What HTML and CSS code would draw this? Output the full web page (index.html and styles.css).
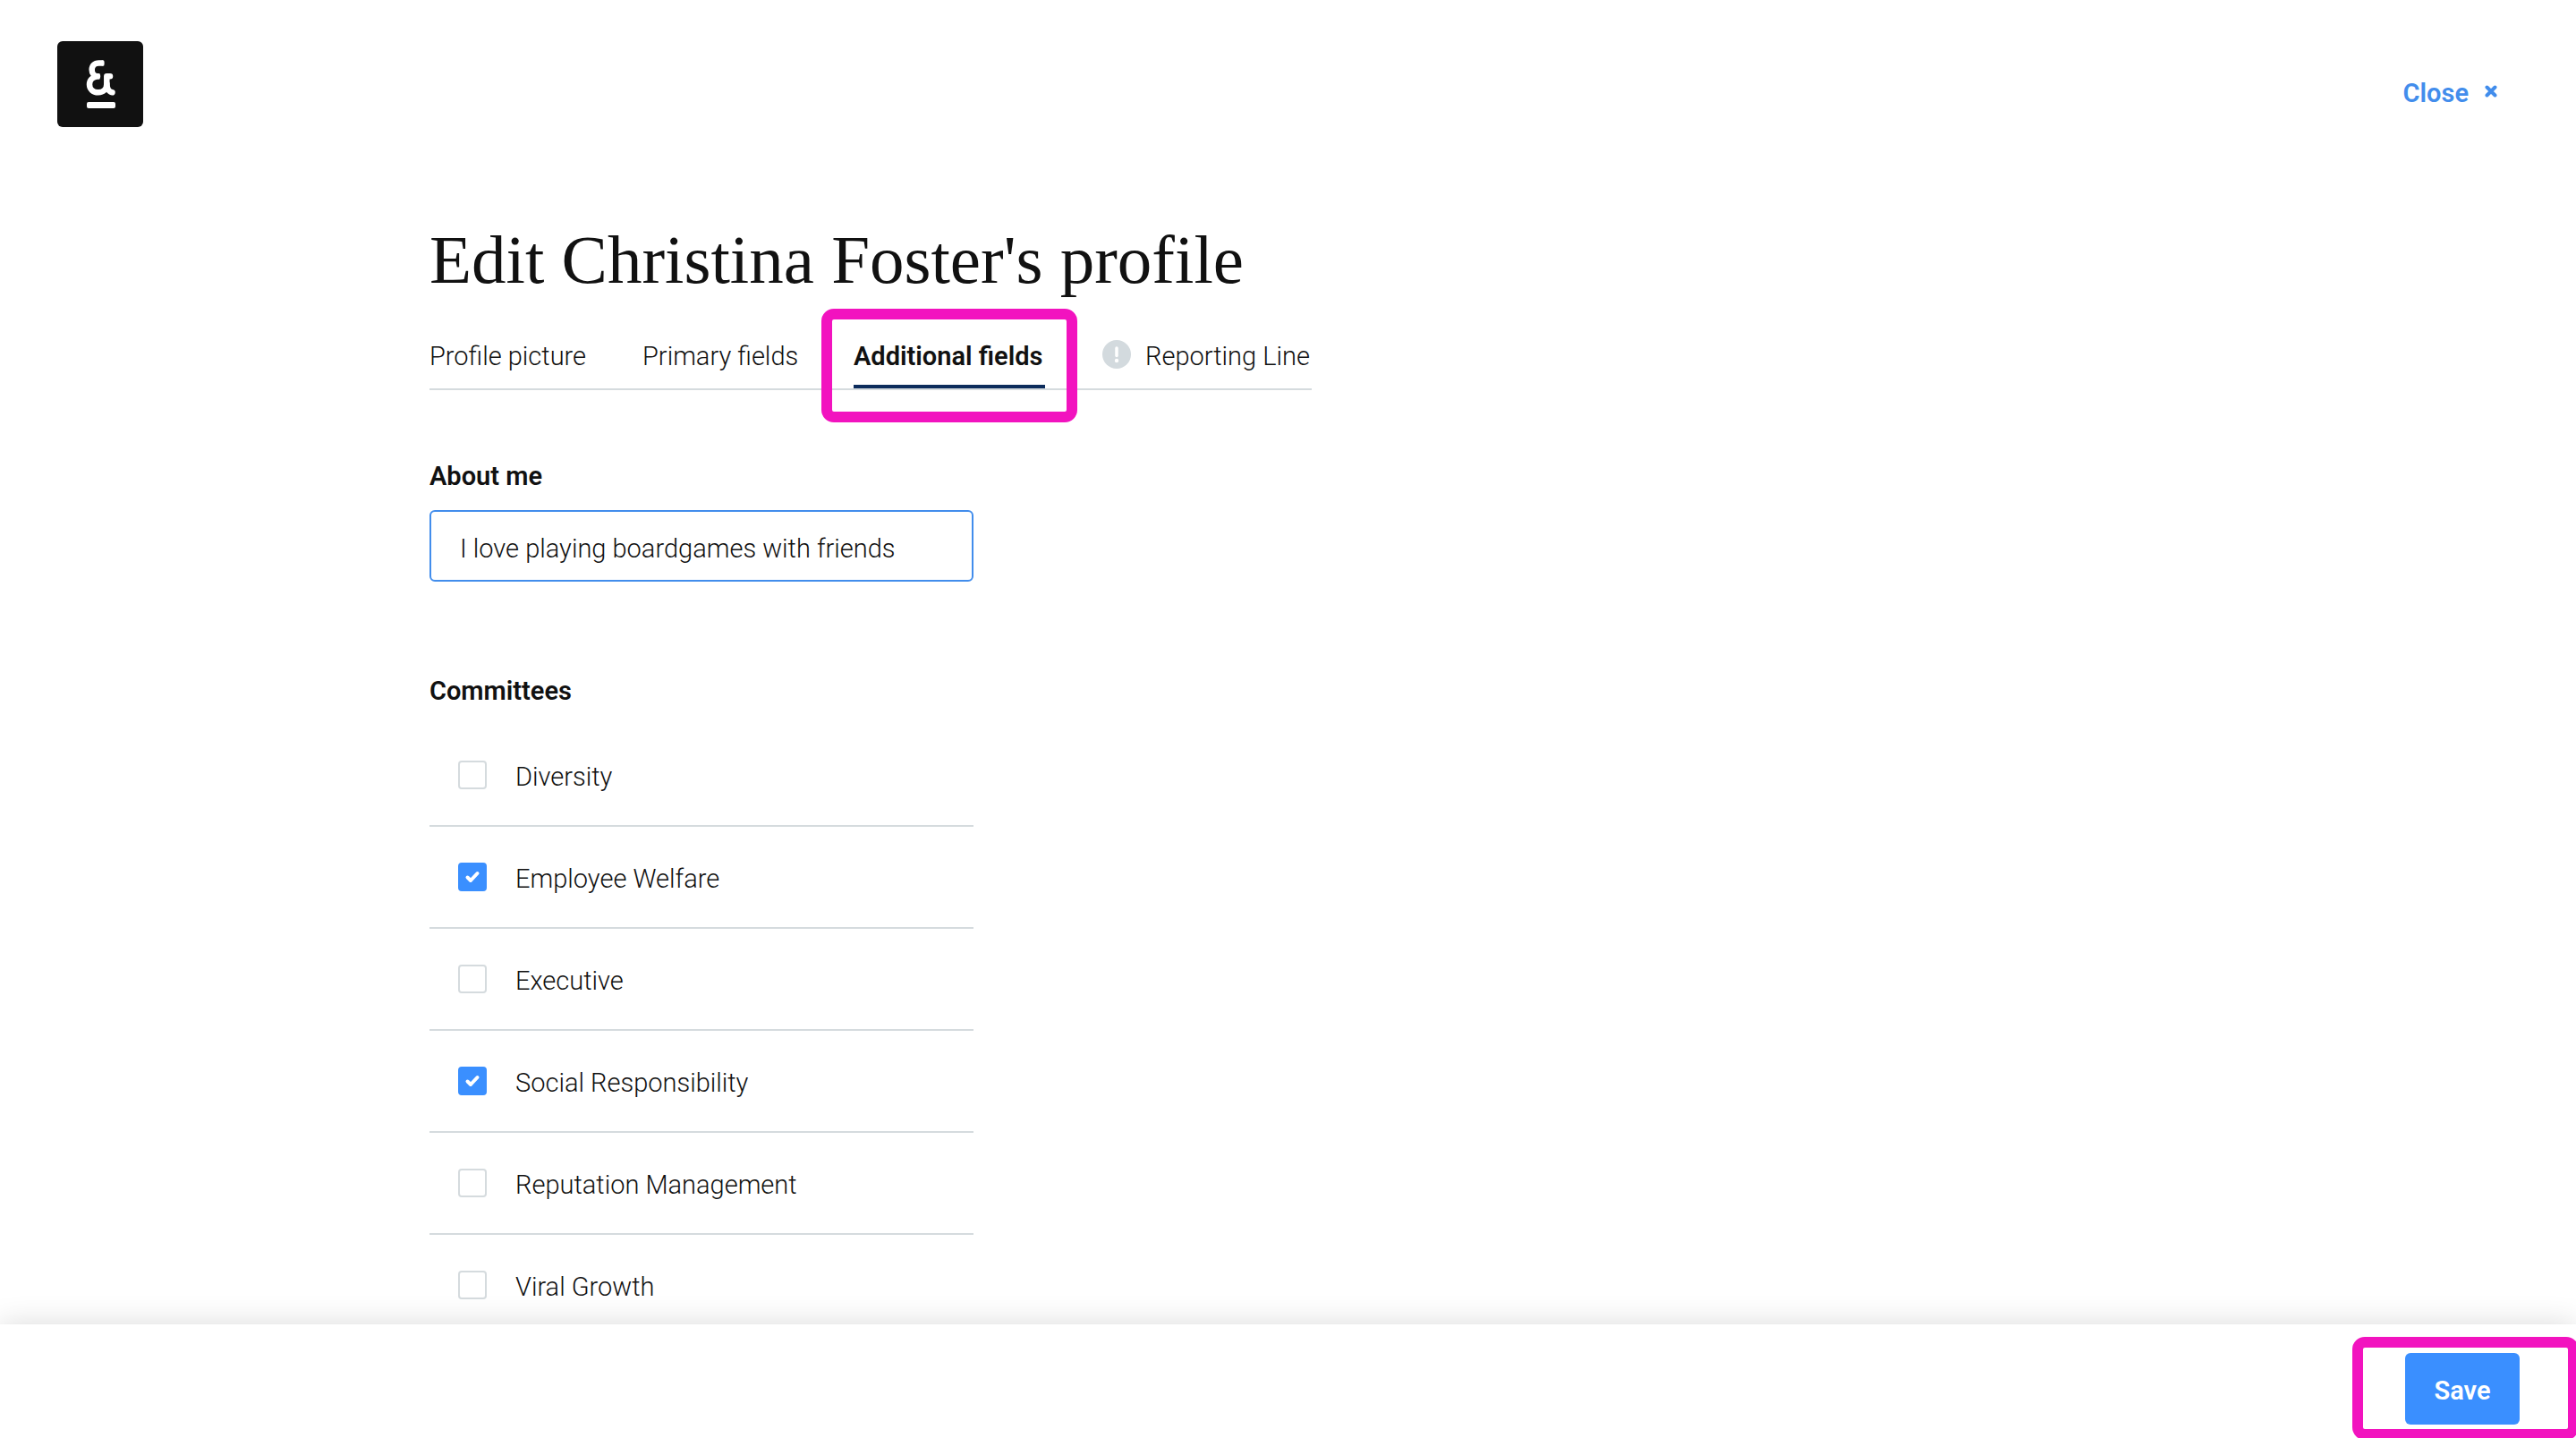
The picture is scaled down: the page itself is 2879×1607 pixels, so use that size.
FILE: index.html
```html
<!DOCTYPE html>
<html lang="en">
<head>
  <meta charset="utf-8">
  <meta name="viewport" content="width=device-width, initial-scale=1">
  <title>Edit Christina Foster's profile</title>
  <link rel="stylesheet" href="styles.css">
</head>
<body>
  <header class="header">
    <a class="logo" href="#" aria-label="Home">
      <svg viewBox="0 0 96 96" fill="none" stroke="#fff" stroke-width="6.500" stroke-linecap="round" stroke-linejoin="round" aria-hidden="true">
        <path d="M49 24.500H46.500C41.500 24.500 38.700 27.500 38.700 32C38.700 36.500 41.500 39.300 45 39.300C39.500 40 36 43.500 36 48.300C36 53.600 40 57.300 45.700 57.300C51.500 57.300 55.300 53.600 55.300 48V39.300H59"/>
        <path d="M49.500 21.300h1.500a1.500 1.500 0 0 1 1.500 1.500v3.500a1.500 1.500 0 0 1-1.500 1.500h-1.500zM45 36.300h2.500v6.200H45z" fill="#fff" stroke="none"/>
        <path d="M55.500 48C55.500 53 58 56.800 61.500 57.300"/>
        <rect x="33" y="68" width="32" height="7" rx="2" fill="#fff" stroke="none"/>
      </svg>
    </a>
    <button class="close" type="button">
      Close
      <svg class="close-icon" viewBox="0 0 14 14" fill="none" stroke="currentColor" stroke-width="4" stroke-linecap="round" aria-hidden="true"><path d="M2.500 2.500l9 9M11.500 2.500l-9 9"/></svg>
    </button>
  </header>

  <main class="content">
    <h1 class="title">Edit Christina Foster's profile</h1>

    <nav class="tabs" aria-label="Profile sections">
      <a class="tab" href="#picture">Profile picture</a>
      <a class="tab" href="#primary">Primary fields</a>
      <a class="tab tab-active" href="#additional" aria-current="page">Additional fields<span class="highlight highlight-tab"></span></a>
      <a class="tab" href="#reporting">
        <svg class="tab-icon" viewBox="0 0 32 32" aria-hidden="true">
          <circle cx="16" cy="16" r="16" fill="#d3dade"/>
          <path d="M16 9v8.500" stroke="#fff" stroke-width="3.500" stroke-linecap="round"/>
          <circle cx="16" cy="23" r="2.200" fill="#fff"/>
        </svg>
        Reporting Line
      </a>
    </nav>

    <form class="form" id="profile-form">
      <div class="field">
        <label class="field-label" for="about">About me</label>
        <input class="text-input" id="about" type="text" value="I love playing boardgames with friends">
      </div>

      <fieldset class="committees">
        <legend class="field-label">Committees</legend>
        <label class="option"><span class="box"><input type="checkbox"></span><span class="option-text">Diversity</span></label>
        <label class="option"><span class="box"><input type="checkbox" checked><svg viewBox="0 0 32 32" aria-hidden="true"><path d="M10.500 16.500l3.500 3.500 7.500-8"/></svg></span><span class="option-text">Employee Welfare</span></label>
        <label class="option"><span class="box"><input type="checkbox"></span><span class="option-text">Executive</span></label>
        <label class="option"><span class="box"><input type="checkbox" checked><svg viewBox="0 0 32 32" aria-hidden="true"><path d="M10.500 16.500l3.500 3.500 7.500-8"/></svg></span><span class="option-text">Social Responsibility</span></label>
        <label class="option"><span class="box"><input type="checkbox"></span><span class="option-text">Reputation Management</span></label>
        <label class="option"><span class="box"><input type="checkbox"></span><span class="option-text">Viral Growth</span></label>
      </fieldset>
    </form>
  </main>

  <footer class="footer">
    <div class="save-area">
      <button class="save" type="submit" form="profile-form">Save</button>
      <span class="highlight highlight-save"></span>
    </div>
  </footer>
</body>
</html>
```
FILE: styles.css
```css
* {
  box-sizing: border-box;
}

body {
  margin: 0;
  height: 100vh;
  display: flex;
  flex-direction: column;
  overflow: hidden;
  background: #fff;
  color: #111;
  font: 300 29px/36px Roboto, "Liberation Sans", sans-serif;
}

button,
input {
  font: inherit;
  color: inherit;
}

.header {
  flex: none;
  display: flex;
  align-items: center;
  justify-content: space-between;
  padding: 46px 88px 0 64px;
}

.logo {
  width: 96px;
  height: 96px;
  border-radius: 6px;
  background: #111;
}

.logo svg {
  display: block;
}

.close {
  display: flex;
  align-items: center;
  gap: 18px;
  padding: 20px 0 0;
  border: 0;
  background: none;
  color: #428dec;
  font-weight: 600;
}

.close-icon {
  width: 14px;
  height: 14px;
  margin-bottom: 4px;
}

.content {
  flex: 1;
  min-height: 0;
  overflow: hidden;
  padding: 100px 64px 0 480px;
}

.title {
  margin: 0 0 42px;
  font: 400 77px/96px "Liberation Serif", serif;
}

.tabs {
  display: grid;
  grid-template-columns: 174px 172px 214px 234px;
  column-gap: 64px;
  width: max-content;
  border-bottom: 2px solid #d5dbde;
}

.tab {
  position: relative;
  display: flex;
  gap: 16px;
  padding-bottom: 14px;
  border-bottom: 4px solid transparent;
  color: inherit;
  text-decoration: none;
  white-space: nowrap;
}

.tab-active {
  border-color: #0c2c5c;
  font-weight: 600;
}

.tab-icon {
  width: 32px;
  height: 32px;
}

.highlight {
  position: absolute;
  border: 12px solid #f213bf;
  border-radius: 14px;
  pointer-events: none;
}

.highlight-tab {
  inset: -35px -36px -42px;
}

.form {
  width: 608px;
  margin-top: 78px;
}

.field {
  margin-bottom: 104px;
}

.field-label {
  display: block;
  margin-bottom: 20px;
  padding: 0;
  font-weight: 600;
}

.text-input {
  display: block;
  width: 100%;
  height: 80px;
  padding: 6px 32px 0;
  border: 2px solid #428dec;
  border-radius: 6px;
  background: #fff;
  outline: 0;
}

.committees {
  min-width: 0;
  margin: 0;
  padding: 0;
  border: 0;
}

.option {
  display: flex;
  align-items: center;
  gap: 32px;
  height: 114px;
  padding-left: 32px;
  border-bottom: 2px solid #d5dbde;
}

.option-text {
  padding-top: 4px;
}

.box {
  display: grid;
  width: 32px;
  height: 32px;
}

.box input,
.box svg {
  grid-area: 1 / 1;
  width: 32px;
  height: 32px;
  margin: 0;
}

.box input {
  appearance: none;
  border: 2px solid #d5dbde;
  border-radius: 4px;
  background: #fff;
}

.box input:checked {
  border-color: #3a8fff;
  background: #3a8fff;
}

.box svg {
  fill: none;
  stroke: #fff;
  stroke-width: 4;
  stroke-linecap: round;
  stroke-linejoin: round;
  pointer-events: none;
}

.footer {
  position: relative;
  flex: none;
  display: flex;
  justify-content: flex-end;
  padding: 32px 63px 15px;
  background: #fff;
  box-shadow: 0 0 32px rgba(0, 0, 0, 0.15);
}

.save-area {
  position: relative;
}

.save {
  display: block;
  width: 128px;
  height: 80px;
  padding: 4px 0 0;
  border: 0;
  border-radius: 6px;
  background: #3a8fff;
  color: #fff;
  font-weight: 600;
}

.highlight-save {
  inset: -18px -66px -17px -59px;
}
```
